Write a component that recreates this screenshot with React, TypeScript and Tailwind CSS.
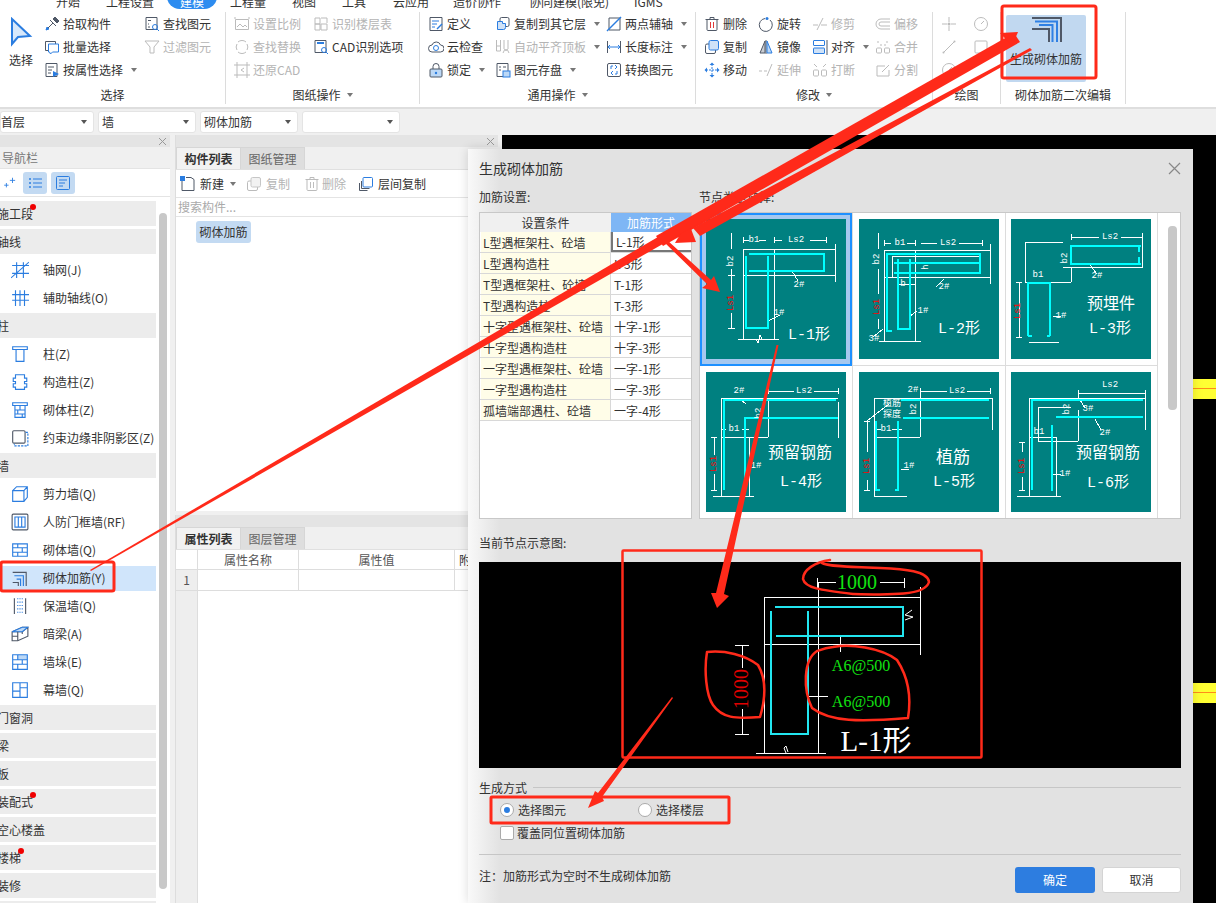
import type { ReactNode } from "react";

const B = "#2b7de0";
const D = "#4f5867";

const icons: Record<string, ReactNode> = {
  pick: <><path d="M2 14l7-7M6 4l6 6" stroke={D} /><path d="M9 3l2-2 4 4-2 2z" fill={D} stroke={D} /><path d="M2 14l1-3 2 2z" fill={B} stroke={B} /></>,
  find: <><path d="M2 1.500h11v12H2z" stroke={D} /><path d="M4 4.500h3M4 8h1M4 11h2" stroke={D} /><circle cx="11" cy="11" r="2.500" stroke={B} /><path d="M13 13l2 2" stroke={B} /></>,
  batch: <><path d="M1.500 2.500h10v9h-10z" stroke={D} /><path d="M4.500 5h10v8h-6l-2 2-1-2h-1z" stroke={B} fill="#fff" /></>,
  filter: <path d="M1 2h14l-5 6v6H6V8z" stroke={D} />,
  attr: <><path d="M2 1.500h11v13H2z" stroke={D} /><path d="M4 5h6M4 8h4M4 11h3" stroke={D} /><path d="M9 9l6 3-6 3z" fill={B} /></>,
  scale: <><path d="M1.500 3.500h13v10h-13z" stroke={D} /><path d="M3 11l3-3 3 3 2-2 2 2" stroke={D} /><path d="M1 1v2M15 1v2" stroke={D} /></>,
  floors: <><path d="M2 2h5v6H2zM8 8h6v6H8zM2 8h5v6H2zM8 2h6v5" stroke={D} /></>,
  replace: <><path d="M4 3a6 6 0 0 1 8 0M12 13a6 6 0 0 1-8 0" stroke={D} /><path d="M3 5a6 6 0 0 0 0 6M13 5a6 6 0 0 1 0 6" stroke={D} /></>,
  cad: <><path d="M2 1.500h11v12H2z" stroke={D} /><path d="M4 4h7" stroke={B} strokeWidth="2" /><circle cx="11" cy="11" r="2.500" stroke={B} /><path d="M13 13l2 2" stroke={B} /></>,
  restore: <><path d="M3 0v16M13 0v16M0 3h16M0 13h16" stroke={D} /><path d="M10 6L7 8l3 2" stroke={D} /></>,
  define: <><path d="M2 1.500h12v13H2z" stroke={D} /><path d="M4 5h7M4 8h5M4 11h3" stroke={B} /><path d="M9 13l5-5" stroke={B} strokeWidth="1.500" /></>,
  cloud: <><path d="M4 13a3.500 3.500 0 0 1 0-7 4.500 4.500 0 0 1 8.500 0 3.500 3.500 0 0 1 0 7z" stroke={D} /><circle cx="8" cy="9" r="2.500" stroke={B} /></>,
  lock: <><rect x="2" y="7" width="12" height="8" rx="1" fill="#bcd8f6" stroke={D} /><path d="M5 7V4.500a3 3 0 0 1 6 0V7" stroke={D} /><circle cx="8" cy="11" r="1.200" fill={B} /></>,
  copyTo: <><rect x="5" y="1.500" width="9" height="9" rx="1.500" fill="#fff" stroke={D} /><path d="M2.500 5.500h5v2h3v4a2 2 0 0 1-2 2h-6z" fill="#cfe2f8" stroke={B} /></>,
  align: <><path d="M1.500 1v11h4V1M1.500 7h4" stroke={D} /><path d="M9 1v9M13 1v9M8 14l2-4 1 2 1-2 2 4" stroke={D} /></>,
  save: <><path d="M2 1.500h11v13H2z" stroke={D} /><path d="M4 5h2M8 5h3M4 8h2" stroke={D} /><rect x="8" y="9" width="7" height="6" fill="#bcd8f6" stroke={B} /></>,
  axis: <><path d="M3 2h11v12H3z" stroke={D} /><path d="M1 15L15 1" stroke={B} strokeWidth="1.500" /></>,
  measure: <><path d="M1.500 2v12M14.500 2v12" stroke={D} /><path d="M2 8h12M4 6L2 8l2 2M12 6l2 2-2 2" stroke={B} /></>,
  convert: <><rect x="1.500" y="1.500" width="13" height="13" rx="1.500" stroke={D} /><path d="M5 7V4h2M11 9v3H9M9 3l2 2-2 2M7 9l-2 2 2 2" stroke={B} /></>,
  del: <><path d="M3 4v9.500a1 1 0 0 0 1 1h8a1 1 0 0 0 1-1V4M1.500 3.500h13M6 3.500V1.500h4v2" stroke={D} /><path d="M6.500 6v6M9.500 6v6" stroke="#e03b3b" /></>,
  rotate: <><path d="M12 4a6.500 6.500 0 1 1-5-1.500" stroke={D} /><circle cx="9" cy="2.500" r="1.500" fill={B} /></>,
  trim: <><path d="M1 9h5M9 9h6M11 2L5 14" stroke={D} /></>,
  offset: <><path d="M15 3H6a5 5 0 0 0 0 10h9M15 6H6a2 2 0 0 0 0 4h9" stroke={D} /></>,
  dup: <><rect x="1.500" y="5" width="10" height="9.500" rx="1.500" stroke={D} /><rect x="5" y="1.500" width="9.500" height="9.500" rx="1.500" fill="#cfe2f8" stroke={B} /></>,
  mirror: <><path d="M8 1v14" stroke={D} /><path d="M7 2L2 14h5z" fill="#c9ccd2" stroke={D} /><path d="M9 2l5 12H9z" fill="#bcd8f6" stroke={B} /></>,
  alignH: <><path d="M15 1v15" stroke={D} /><rect x="1.500" y="1.500" width="11" height="5" rx="0.500" stroke={B} /><rect x="1.500" y="9" width="11" height="5.500" rx="0.500" fill="#cfe2f8" stroke={B} /></>,
  merge: <><path d="M2 3h2M11 3h2M5 6l2 0M9 6h2" stroke={D} /><rect x="1.500" y="9" width="5" height="5" rx="1" stroke={D} /><rect x="9.500" y="9" width="5" height="5" rx="1" stroke={D} /></>,
  move: <><path d="M8 2v12M2 8h12" stroke={B} strokeDasharray="2 1" /><path d="M5.500 3L8 .5 10.500 3zM5.500 13L8 15.500 10.500 13zM3 5.500L.5 8 3 10.500zM13 5.500L15.500 8 13 10.500z" fill={B} /></>,
  extend: <><path d="M1 9h3M6 9h3M14 2L9 14" stroke={D} /></>,
  split: <><path d="M2 2l3 3M11 5l3-3" stroke={D} /><rect x="1.500" y="8" width="5" height="6" rx="1" stroke={D} /><rect x="9.500" y="8" width="5" height="6" rx="1" stroke={D} /></>,
  divide: <><path d="M2 4h8M2 4v10h12V8" stroke={D} /><path d="M7 10l7-7" stroke={D} /></>,
  point: <><path d="M8 1v5M8 10v5M1 8h5M10 8h5" stroke={D} /><circle cx="8" cy="8" r="1.500" fill={D} /></>,
  clock: <><circle cx="8" cy="8" r="6.500" stroke={D} /><path d="M8 8l3-3" stroke={D} /></>,
  line: <><path d="M2 14L14 2" stroke={D} /><circle cx="2.500" cy="13.500" r="1" fill={D} /><circle cx="13.500" cy="2.500" r="1" fill={D} /></>,
  rect: <rect x="2" y="2" width="12" height="12" rx="1" stroke={D} />,
  plus: <><path d="M12 2v6M9 5h6M5 8v5M2.500 10.500h5" stroke={B} /></>,
  list: <><path d="M2 4h2M2 8h2M2 12h2" stroke={B} strokeWidth="1.500" /><path d="M6 4h9M6 8h9M6 12h9" stroke={B} /></>,
  form: <><rect x="1.500" y="1.500" width="13" height="13" rx="1" stroke={B} /><path d="M4 5h8M4 8h6M4 11h4" stroke={B} /></>,
  newFile: <><path d="M2 3.500v11h12v-11l-3-2H6" stroke={D} /><path d="M0 0h5v5H0z" fill={B} /></>,
  layerCopy: <><rect x="5" y="1.500" width="9.500" height="9.500" rx="1" fill="#fff" stroke={B} /><path d="M3.500 5v7.500h8M1.500 7v7.500h8" stroke={D} /></>,
  grid: <><path d="M0 15L16 1M1 4h15M1 11h15M5 1v14M11 1v14" stroke={B} /></>,
  aux: <><path d="M1 5h15M1 10h15M4 1v14M8 1v14M12 1v14" stroke={B} /></>,
  col: <><path d="M1.500 1.500h13v2.500h-13zM4.500 4v10.500h7V4" stroke={B} /></>,
  ccol: <><path d="M4 1.500h8v3h2v3h-2v2h2v3h-2v2H4v-2H2v-3h2v-2H2v-3h2z" stroke={B} /></>,
  bcol: <><path d="M1.500 1.500h13v2.500h-13zM3.500 4v10.500h9V4M3.500 8h9M3.500 11.500h9M8 4v4M6 8v3.500M10 11.500v3" stroke={B} /></>,
  edge: <><rect x="1.500" y="1.500" width="11" height="11" rx="1" stroke={D} /><path d="M13 3h2v12H3v-2" stroke={B} strokeDasharray="2 1" /></>,
  shear: <><path d="M1.500 5h10v9.500h-10zM1.500 5L5 1.500h9.500V11l-3 3.500M11.500 5l3-3.500" stroke={B} /></>,
  door: <><rect x="1" y="1" width="14" height="14" rx="1" stroke={D} /><path d="M3.500 3.500h9v9h-9zM6.500 3.500v9M9.500 3.500v9" stroke={B} /></>,
  brick: <><path d="M1.500 2.500h13v11h-13zM1.500 6h13M1.500 10h13M6 2.500V6M10 6v4M6 10v3.500" stroke={B} /></>,
  rebar: <><path d="M1.500 3h12v12" stroke={D} /><path d="M3 6h8v9M5 9h3.500v6" stroke={B} /><path d="M1.500 12h5v3" stroke={D} /></>,
  therm: <><path d="M3 1v14M13 1v14" stroke={D} /><path d="M6 1v14M8 1v14M10 1v14" stroke={B} strokeDasharray="1 2" /></>,
  beam: <><path d="M1 6l9-4h5v8l-9 4H1zM1 6h9l5-4M10 6v2" stroke={D} /><path d="M1 6l9-4h5l-5 4z" fill="#bcd8f6" stroke={B} /><path d="M1 10h5M6 6v8" stroke={D} /></>,
  buttress: <><path d="M6 1.500h8.500V6H6z" fill="#bcd8f6" /><path d="M1.500 1.500h13v13h-13zM1.500 6h13M1.500 10h13M6 1.500V6M10 6v4M6 10v4.500" stroke={B} /></>,
  curtain: <><path d="M1.500 1.500h13v13h-13zM8 1.500v13M8 6h6.500M1.500 9H8" stroke={B} /></>,
};

const Ico = ({ name, size = 16, off = false }: { name: string; size?: number; off?: boolean }) => (
  <svg
    width={size}
    height={size}
    viewBox="0 0 16 16"
    fill="none"
    className={off ? "shrink-0 opacity-40 grayscale" : "shrink-0"}
  >
    {icons[name]}
  </svg>
);

const Caret = ({ color = "border-t-[#777]" }: { color?: string }) => (
  <span className={`inline-block w-0 h-0 border-x-[3px] border-t-[4px] border-x-transparent ${color}`} />
);

type RibbonEntry = { icon: string; text: string; off?: boolean; caret?: boolean };

const RibbonCol = ({ w, items }: { w: string; items: RibbonEntry[] }) => (
  <div className={`${w} shrink-0 flex flex-col`}>
    {items.map((it) => (
      <div key={it.text} className="h-[23px] flex items-center gap-[3px] whitespace-nowrap">
        <Ico name={it.icon} off={it.off} />
        <span className={it.off ? "text-[#b4b4b4]" : "text-[#333]"}>{it.text}</span>
        {it.caret && <span className="ml-[5px] flex"><Caret /></span>}
      </div>
    ))}
  </div>
);

const RibbonGroup = ({ w, label, caret, children }: { w: string; label: string; caret?: boolean; children: ReactNode }) => (
  <div className={`${w} shrink-0 h-[92px] mt-[3px] flex flex-col border-r border-[#dcdcdc]`}>
    <div className="flex-1 flex">{children}</div>
    <div className="h-[22px] pt-[4px] flex items-center justify-center gap-[6px] text-[#333]">
      <span>{label}</span>
      {caret && <Caret />}
    </div>
  </div>
);

const Ribbon = () => (
  <div className="h-[100px] flex bg-white border-b-2 border-[#dedede] text-xs">
    <RibbonGroup w="w-[226px]" label="选择">
      <div className="w-[44px] flex flex-col items-center shrink-0">
        <svg width="24" height="30" viewBox="0 0 24 30" className="mt-[5px] -ml-[2px]">
          <path d="M3 2l18 17-12 1-6 7z" fill="#d7e8fb" stroke={B} strokeWidth="2" />
        </svg>
        <span className="mt-[5px] -ml-[2px] text-[#333]">选择</span>
      </div>
      <RibbonCol
        w="w-[100px]"
        items={[
          { icon: "pick", text: "拾取构件" },
          { icon: "batch", text: "批量选择" },
          { icon: "attr", text: "按属性选择", caret: true },
        ]}
      />
      <RibbonCol
        w="w-[80px]"
        items={[
          { icon: "find", text: "查找图元" },
          { icon: "filter", text: "过滤图元", off: true },
        ]}
      />
    </RibbonGroup>
    <RibbonGroup w="w-[194px]" label="图纸操作" caret>
      <div className="pl-[8px] flex">
        <RibbonCol
          w="w-[79px]"
          items={[
            { icon: "scale", text: "设置比例", off: true },
            { icon: "replace", text: "查找替换", off: true },
            { icon: "restore", text: "还原CAD", off: true },
          ]}
        />
        <RibbonCol
          w="w-[100px]"
          items={[
            { icon: "floors", text: "识别楼层表", off: true },
            { icon: "cad", text: "CAD识别选项" },
          ]}
        />
      </div>
    </RibbonGroup>
    <RibbonGroup w="w-[276px]" label="通用操作" caret>
      <div className="pl-[8px] flex">
        <RibbonCol
          w="w-[67px]"
          items={[
            { icon: "define", text: "定义" },
            { icon: "cloud", text: "云检查" },
            { icon: "lock", text: "锁定", caret: true },
          ]}
        />
        <RibbonCol
          w="w-[111px]"
          items={[
            { icon: "copyTo", text: "复制到其它层", caret: true },
            { icon: "align", text: "自动平齐顶板", caret: true, off: true },
            { icon: "save", text: "图元存盘", caret: true },
          ]}
        />
        <RibbonCol
          w="w-[85px]"
          items={[
            { icon: "axis", text: "两点辅轴", caret: true },
            { icon: "measure", text: "长度标注", caret: true },
            { icon: "convert", text: "转换图元" },
          ]}
        />
      </div>
    </RibbonGroup>
    <RibbonGroup w="w-[237px]" label="修改" caret>
      <div className="pl-[8px] flex">
        <RibbonCol
          w="w-[54px]"
          items={[
            { icon: "del", text: "删除" },
            { icon: "dup", text: "复制" },
            { icon: "move", text: "移动" },
          ]}
        />
        <RibbonCol
          w="w-[54px]"
          items={[
            { icon: "rotate", text: "旋转" },
            { icon: "mirror", text: "镜像" },
            { icon: "extend", text: "延伸", off: true },
          ]}
        />
        <RibbonCol
          w="w-[63px]"
          items={[
            { icon: "trim", text: "修剪", off: true },
            { icon: "alignH", text: "对齐", caret: true },
            { icon: "split", text: "打断", off: true },
          ]}
        />
        <RibbonCol
          w="w-[50px]"
          items={[
            { icon: "offset", text: "偏移", off: true },
            { icon: "merge", text: "合并", off: true },
            { icon: "divide", text: "分割", off: true },
          ]}
        />
      </div>
    </RibbonGroup>
    <RibbonGroup w="w-[68px]" label="绘图">
      <div className="pl-[8px] flex">
        <div className="w-[32px] flex flex-col">
          {["point", "line", "clock"].map((n) => (
            <div key={n} className="h-[23px] flex items-center"><Ico name={n} off /></div>
          ))}
        </div>
        <div className="flex flex-col">
          {["clock", "rect"].map((n) => (
            <div key={n} className="h-[23px] flex items-center"><Ico name={n} off /></div>
          ))}
        </div>
      </div>
    </RibbonGroup>
    <RibbonGroup w="w-[125px]" label="砌体加筋二次编辑">
      <div className="pl-[5px]">
        <div className="w-[80px] h-[67px] mt-[3px] bg-[#c1d8f0] rounded-[2px] flex flex-col items-center">
          <svg width="32" height="30" viewBox="0 0 32 30" fill="none" className="ml-[2px]">
            <path d="M1 3H30V27" stroke="#4f5867" strokeWidth="2" />
            <path d="M4 6.500H26V27M8 10H21.500V27" stroke="#2f80e4" strokeWidth="2" />
            <path d="M1 14H18V27" stroke="#4f5867" strokeWidth="2" />
          </svg>
          <span className="mt-[6px] text-[#333]">生成砌体加筋</span>
        </div>
      </div>
    </RibbonGroup>
  </div>
);

const selects = [
  { w: "w-[94px]", text: "首层", pad: "pl-0" },
  { w: "w-[98px]", text: "墙", pad: "pl-[3px]" },
  { w: "w-[98px]", text: "砌体加筋", pad: "pl-[3px]" },
  { w: "w-[98px]", text: "", pad: "pl-[3px]" },
];

const Toolbar = () => (
  <div className="h-[26px] bg-[#f0f0f0] flex gap-[4px] pt-[2px] text-xs text-[#333]">
    {selects.map((s) => (
      <div key={s.w + s.text} className={`${s.w} ${s.pad} h-[22px] bg-white border border-[#e4e4e4] rounded-[3px] flex items-center justify-between pr-[6px]`}>
        <span>{s.text}</span>
        <Caret color="border-t-[#555]" />
      </div>
    ))}
  </div>
);

type NavSection = { title: string; dot?: number; items?: { icon: string; text: string; active?: boolean }[] };

const nav: NavSection[] = [
  { title: "施工段", dot: 1 },
  { title: "轴线", items: [{ icon: "grid", text: "轴网(J)" }, { icon: "aux", text: "辅助轴线(O)" }] },
  {
    title: "柱",
    items: [
      { icon: "col", text: "柱(Z)" },
      { icon: "ccol", text: "构造柱(Z)" },
      { icon: "bcol", text: "砌体柱(Z)" },
      { icon: "edge", text: "约束边缘非阴影区(Z)" },
    ],
  },
  {
    title: "墙",
    items: [
      { icon: "shear", text: "剪力墙(Q)" },
      { icon: "door", text: "人防门框墙(RF)" },
      { icon: "brick", text: "砌体墙(Q)" },
      { icon: "rebar", text: "砌体加筋(Y)", active: true },
      { icon: "therm", text: "保温墙(Q)" },
      { icon: "beam", text: "暗梁(A)" },
      { icon: "buttress", text: "墙垛(E)" },
      { icon: "curtain", text: "幕墙(Q)" },
    ],
  },
  { title: "门窗洞" },
  { title: "梁" },
  { title: "板" },
  { title: "装配式", dot: 1 },
  { title: "空心楼盖" },
  { title: "楼梯", dot: 1 },
  { title: "装修" },
  { title: "土方" },
];

const CloseStrip = () => (
  <div className="h-[12px] bg-[#e4e4e4] flex items-center justify-end pr-[3px]">
    <svg width="9" height="9" viewBox="0 0 9 9"><path d="M1 1l7 7M8 1L1 8" stroke="#999" /></svg>
  </div>
);

const LeftPanel = () => (
  <div className="w-[170px] shrink-0 h-full bg-white relative overflow-hidden text-xs text-[#333]">
    <CloseStrip />
    <div className="h-[22px] bg-[#f0f0f0] flex items-center text-[#777] pl-[2px] border-b border-[#e4e4e4]">导航栏</div>
    <div className="h-[28px] flex items-center pl-[2px] border-b border-[#e4e4e4]">
      <Ico name="plus" size={14} />
      <div className="ml-[7px] w-[24px] h-[22px] bg-[#c3daf2] rounded-[3px] flex items-center justify-center"><Ico name="list" size={16} /></div>
      <div className="ml-[4px] w-[24px] h-[22px] bg-[#c3daf2] rounded-[3px] flex items-center justify-center"><Ico name="form" size={16} /></div>
    </div>
    <div className="w-[156px] pt-[4px] flex flex-col gap-[3px]">
      {nav.map((sec) => (
        <div key={sec.title}>
          <div className="h-[25px] bg-[#ececec] flex items-center relative">
            <span className="-ml-[3px] whitespace-nowrap relative">
              {sec.title}
              {sec.dot && <span className="absolute -right-[3px] -top-[2px] w-[6px] h-[6px] rounded-full bg-[#f00000]" />}
            </span>
          </div>
          {sec.items && (
            <div className="pt-[2px] -mb-[2px]">
              {sec.items.map((it) => (
                <div key={it.text} className="h-[28px] flex items-center">
                  <div className={`w-full h-[25px] flex items-center pl-[11px] gap-[14px] whitespace-nowrap ${it.active ? "bg-[#d0e5fb]" : ""}`}>
                    <Ico name={it.icon} size={18} />
                    <span>{it.text}</span>
                  </div>
                </div>
              ))}
            </div>
          )}
        </div>
      ))}
    </div>
    <div className="absolute left-[159px] top-[78px] w-[8px] h-[676px] rounded-[4px] bg-[#c8c8c8]" />
  </div>
);

const Tabs = ({ a, b }: { a: string; b: string }) => (
  <div className="h-[23px] bg-[#f0f0f0] flex border-b border-[#e0e0e0] text-xs">
    <div className="w-[65px] flex items-center justify-center font-bold text-[#333] bg-[#f2f2f2] border border-b-0 border-[#d6d6d6]">{a}</div>
    <div className="w-[64px] flex items-center justify-center text-[#666] bg-[#dedede] border-r border-t border-[#d6d6d6]">{b}</div>
  </div>
);

const MiddlePanel = () => (
  <div className="w-[323px] shrink-0 h-full flex flex-col text-xs text-[#333] ml-[5px] bg-[#f0f0f0]">
    <div className="h-[376px] bg-white flex flex-col border-l border-[#ddd]">
      <CloseStrip />
      <Tabs a="构件列表" b="图纸管理" />
      <div className="h-[27px] flex items-center pl-[4px] shrink-0">
        <Ico name="newFile" />
        <span className="ml-[4px]">新建</span>
        <span className="ml-[6px] flex"><Caret /></span>
        <span className="ml-[10px]"><Ico name="dup" off /></span>
        <span className="ml-[4px] text-[#b4b4b4]">复制</span>
        <span className="ml-[14px]"><Ico name="del" off /></span>
        <span className="ml-[2px] text-[#b4b4b4]">删除</span>
        <span className="ml-[12px]"><Ico name="layerCopy" /></span>
        <span className="ml-[4px]">层间复制</span>
      </div>
      <div className="h-[20px] flex items-center pl-[2px] text-[#aaa] border-y border-[#e4e4e4]">搜索构件...</div>
      <div className="pl-[20px] pt-[4px]">
        <div className="w-[55px] h-[22px] bg-[#c3daf2] rounded-[3px] flex items-center justify-center">砌体加筋</div>
      </div>
    </div>
    <div className="h-[4px]" />
    <div className="flex-1 bg-white flex flex-col border-l border-[#ddd]">
      <CloseStrip />
      <Tabs a="属性列表" b="图层管理" />
      <div className="flex h-[20px] border-b border-[#ddd] shrink-0">
        <div className="w-[22px] border-r border-[#ddd]" />
        <div className="w-[101px] border-r border-[#ddd] flex items-center justify-center text-[#555]">属性名称</div>
        <div className="w-[156px] border-r border-[#ddd] flex items-center justify-center text-[#555]">属性值</div>
        <div className="pl-[4px] flex items-center">附加</div>
      </div>
      <div className="flex h-[21px] border-b border-[#ddd] shrink-0">
        <div className="w-[22px] border-r border-[#ddd] bg-[#eeeeee] flex items-center justify-center text-[#555]">1</div>
        <div className="w-[101px] border-r border-[#ddd]" />
        <div className="w-[156px] border-r border-[#ddd]" />
      </div>
      <div className="flex-1 w-[22px] bg-[#eeeeee] border-r border-[#ddd]" />
    </div>
  </div>
);

const Canvas = () => (
  <div className="flex-1 h-full bg-black ml-[4px] flex flex-col">
    <div className="mt-[244px] h-[20px] bg-[#ffff33] pt-[9px]"><div className="h-[1px] bg-[#ff8c1a]" /></div>
    <div className="mt-[284px] h-[20px] bg-[#ffff33] pt-[9px]"><div className="h-[1px] bg-[#ff8c1a]" /></div>
  </div>
);

const rows = [
  ["L型遇框架柱、砼墙", "L-1形"],
  ["L型遇构造柱", "L-3形"],
  ["T型遇框架柱、砼墙", "T-1形"],
  ["T型遇构造柱", "T-3形"],
  ["十字型遇框架柱、砼墙", "十字-1形"],
  ["十字型遇构造柱", "十字-3形"],
  ["一字型遇框架柱、砼墙", "一字-1形"],
  ["一字型遇构造柱", "一字-3形"],
  ["孤墙端部遇柱、砼墙", "一字-4形"],
];

const SettingsTable = () => (
  <div className="w-[213px] h-[307px] bg-white border border-[#c8c8c8] text-xs text-[#333] shrink-0">
    <div className="flex h-[19px]">
      <div className="w-[131px] bg-[#f0f0f0] flex items-center justify-center pt-[1px]">设置条件</div>
      <div className="flex-1 bg-[#7eb6f5] text-white flex items-center justify-center pt-[1px]">加筋形式</div>
    </div>
    {rows.map((r, i) => (
      <div key={r[0]} className="flex h-[21px] border-b border-[#d8d8d8] pl-[1px]">
        <div className="w-[130px] bg-[#fffde8] border-r border-[#d8d8d8] flex items-center pl-[2px] pt-[1px] whitespace-nowrap">{r[0]}</div>
        <div className={`flex-1 flex items-center pl-[3px] pt-[1px] ${i === 0 ? "border-2 border-[#777] border-t-0 border-r-0" : ""}`}>{r[1]}</div>
      </div>
    ))}
  </div>
);

const W = "#ffffff";
const C = "#00ffff";
const mono = '"Liberation Mono", "Noto Sans CJK SC", monospace';

const Txt = ({ x, y, s = 10, fill = W, rot, children }: { x: number; y: number; s?: number; fill?: string; rot?: boolean; children: ReactNode }) => (
  <text
    x={x}
    y={y}
    fontSize={s}
    fill={fill}
    fontFamily={mono}
    textAnchor="middle"
    dominantBaseline="central"
    transform={rot ? `rotate(-90 ${x} ${y})` : undefined}
  >
    {children}
  </text>
);

const Thumb = ({ lines, cyan, children }: { lines: string; cyan: string[]; children: ReactNode }) => (
  <svg width="140" height="140" viewBox="0 0 140 140" className="bg-[#008080]" fill="none">
    <path d={lines} stroke={W} strokeWidth="1" shapeRendering="crispEdges" />
    {cyan.map((d) => (
      <path key={d} d={d} stroke={C} strokeWidth="2" shapeRendering="crispEdges" />
    ))}
    {children}
  </svg>
);

const thumbs: ReactNode[] = [
  <Thumb
    key="1"
    lines="M37 21H43M53 21H60M68 21H76M104 21H120M37 18v6M68 18v6M120 18v6M37 30H129M37 56H129M37 30V120M68 30V120M32 120H73M129 25V63M25 14V30M25 50V72M25 94V109M22 109H29M22 56H29M86 52L92 62M62 102L74 96M50 120l2 4 2-8 2 4"
    cyan={["M43 35H118V52H43", "M40 37V109H62V37"]}
  >
    <Txt x={48} y={21} s={9}>b1</Txt>
    <Txt x={90} y={21} s={9}>Ls2</Txt>
    <Txt x={25} y={42} s={9} rot>b2</Txt>
    <Txt x={25} y={84} s={9} fill="#ff0000" rot>Ls1</Txt>
    <Txt x={93} y={66} s={9}>2#</Txt>
    <Txt x={73} y={94} s={9}>1#</Txt>
    <Txt x={103} y={116} s={15}>L-1形</Txt>
  </Thumb>,
  <Thumb
    key="2"
    lines="M25 24H32M48 24H56M62 24H78M100 24H123M25 21v6M56 21v6M123 21v6M25 31H131M25 58H131M25 31V122M56 31V122M20 122H62M131 25V65M33 37V58M33 37H121M19 14V30M19 50V75M19 100V110M40 65H56M77 68L85 60M50 98L58 92M24 110L14 118"
    cyan={["M33 112H28V35H121V54H35", "M35 44H121", "M39 40V110H51V40"]}
  >
    <Txt x={41} y={24} s={9}>b1</Txt>
    <Txt x={89} y={24} s={9}>Ls2</Txt>
    <Txt x={18} y={40} s={9} rot>b2</Txt>
    <Txt x={18} y={88} s={9} fill="#ff0000" rot>Ls1</Txt>
    <Txt x={44} y={65} s={9}>b</Txt>
    <Txt x={67} y={48} s={9} rot>h</Txt>
    <Txt x={85} y={68} s={9}>2#</Txt>
    <Txt x={64} y={92} s={9}>1#</Txt>
    <Txt x={15} y={120} s={9}>3#</Txt>
    <Txt x={100} y={110} s={15}>L-2形</Txt>
  </Thumb>,
  <Thumb
    key="3"
    lines="M60 18H88M110 18H131M60 15v6M131 15v6M14 23H52M14 23V63M14 63H60M60 49V63M52 48H131M131 14V49M8 63V118M5 63H11M5 118H11M18 123H48M20 63H45M42 97H50M79 46L86 55"
    cyan={["M130 27H60V45H130", "M128 27V33M128 45V38", "M17 117V64H39V117", "M17 117H21M39 117H36"]}
  >
    <Txt x={99} y={18} s={9}>Ls2</Txt>
    <Txt x={27} y={56} s={9}>b1</Txt>
    <Txt x={54} y={39} s={9} rot>b2</Txt>
    <Txt x={7} y={92} s={9} fill="#ff0000" rot>Ls1</Txt>
    <Txt x={86} y={57} s={9}>2#</Txt>
    <Txt x={50} y={97} s={9}>1#</Txt>
    <Txt x={100} y={86} s={16}>预埋件</Txt>
    <Txt x={99} y={110} s={15}>L-3形</Txt>
  </Thumb>,
  <Thumb
    key="4"
    lines="M62 19H88M108 19H132M62 16v6M132 16v6M15 26H132M15 65H62M62 26V65M15 26V124M7 124H48M43 65V124M15 57H20M36 57H43M8 65V83M8 102V118M5 65H11M5 118H11M132 30V66M33 26L40 32"
    cyan={["M18 118V28H130", "M39 112V46H132"]}
  >
    <Txt x={33} y={19} s={9}>2#</Txt>
    <Txt x={98} y={19} s={9}>Ls2</Txt>
    <Txt x={28} y={57} s={9}>b1</Txt>
    <Txt x={53} y={41} s={9} rot>b2</Txt>
    <Txt x={8} y={92} s={9} fill="#ff0000" rot>Ls1</Txt>
    <Txt x={50} y={94} s={9}>1#</Txt>
    <Txt x={94} y={82} s={16}>预留钢筋</Txt>
    <Txt x={95} y={110} s={15}>L-4形</Txt>
  </Thumb>,
  <Thumb
    key="5"
    lines="M61 19H88M108 19H131M61 16v6M131 16v6M15 26H133M15 65H61M61 19V65M15 26V124M15 124H48M133 26V58M8 49V80M8 108V118M5 49H11M5 118H11M15 57H22M33 57H43M42 97H50M30 32L8 49"
    cyan={["M42 28H130", "M44 46H130", "M17 49V118H21", "M39 49V118H36"]}
  >
    <Txt x={54} y={18} s={9}>2#</Txt>
    <Txt x={98} y={19} s={9}>Ls2</Txt>
    <Txt x={33} y={32} s={9}>植筋</Txt>
    <Txt x={33} y={43} s={9}>探度</Txt>
    <Txt x={55} y={37} s={9} rot>b2</Txt>
    <Txt x={27} y={57} s={9}>b1</Txt>
    <Txt x={8} y={94} s={9} fill="#ff0000" rot>Ls1</Txt>
    <Txt x={50} y={94} s={9}>1#</Txt>
    <Txt x={94} y={86} s={17}>植筋</Txt>
    <Txt x={95} y={110} s={15}>L-5形</Txt>
  </Thumb>,
  <Thumb
    key="6"
    lines="M67 21H134M67 18V28M134 18V58M18 26H134M18 26V124M6 124H50M45 65V124M27 35H60M27 35V69H67M67 38V69M18 65H45M11 70V80M11 105V118M8 70H14M8 118H14M69 28L74 36M84 47L90 58M42 102H50"
    cyan={["M21 118V28H132", "M45 45H132", "M41 119V53"]}
  >
    <Txt x={99} y={13} s={9}>Ls2</Txt>
    <Txt x={77} y={37} s={9}>3#</Txt>
    <Txt x={94} y={61} s={9}>2#</Txt>
    <Txt x={56} y={37} s={9} rot>b2</Txt>
    <Txt x={28} y={60} s={9}>b1</Txt>
    <Txt x={11} y={94} s={9} fill="#ff0000" rot>Ls1</Txt>
    <Txt x={54} y={102} s={9}>1#</Txt>
    <Txt x={97} y={82} s={16}>预留钢筋</Txt>
    <Txt x={97} y={111} s={15}>L-6形</Txt>
  </Thumb>,
];

const NodeGrid = () => (
  <div className="w-[482px] h-[307px] bg-white border border-[#c8c8c8] flex">
    <div className="w-[458px] grid grid-cols-3 grid-rows-2 border-r border-[#dcdcdc]">
      {thumbs.map((t, i) => (
        <div key={i} className={`flex items-center justify-center ${i === 0 ? "border-2 border-[#1e90ff] bg-[#a6c8ef]" : "border-[#dcdcdc]"} ${i > 0 && i < 3 ? "border-b border-l" : ""} ${i > 3 ? "border-l" : ""}`}>
          {t}
        </div>
      ))}
    </div>
    <div className="flex-1 pl-[10px] pt-[13px]">
      <div className="w-[9px] h-[184px] rounded-[4px] bg-[#c8c8c8]" />
    </div>
  </div>
);

const Preview = () => (
  <div className="w-[702px] h-[206px] bg-black shrink-0">
    <svg width="702" height="206" viewBox="479 562 702 206" fill="none">
      <path
        d="M764 597H920M764 644H920M764 597V753M818 597V753M756 753H826M920 587V655M818 583V598M817 582H836M880 582H904M904 578V588M817 578V588M840 636V652M742 645V668M742 709V734M735 645H749M735 734H749M808 696H828"
        stroke="#fff"
        shapeRendering="crispEdges"
      />
      <path d="M912 610l-7 5 8 2-8 3M786 753l-2-5 2-2 2 6" stroke="#fff" />
      <path d="M775 607H903V636H776M771 611V734H808V611" stroke="#22e6f0" strokeWidth="2" shapeRendering="crispEdges" />
      <text x="857" y="589" fontSize="20" fill="#12e212" fontFamily='"Liberation Serif", serif' textAnchor="middle">1000</text>
      <text x="861" y="671" fontSize="16" fill="#12e212" fontFamily='"Liberation Serif", serif' textAnchor="middle">A6@500</text>
      <text x="861" y="707" fontSize="16" fill="#12e212" fontFamily='"Liberation Serif", serif' textAnchor="middle">A6@500</text>
      <text x="748" y="689" fontSize="20" fill="#e00000" fontFamily='"Liberation Serif", serif' textAnchor="middle" transform="rotate(-90 748 689)">1000</text>
      <text x="876" y="751" fontSize="29" fill="#fff" fontFamily='"Liberation Serif", "Noto Sans CJK SC", serif' textAnchor="middle">L-1形</text>
    </svg>
  </div>
);

const Dialog = () => (
  <div className="absolute left-[468px] top-[149px] w-[725px] h-[754px] pl-[11px] pr-[12px] text-xs text-[#333] bg-[linear-gradient(90deg,#f9f9f9,#e2e2e2_32px)] shadow-[0_0_10px_rgba(0,0,0,0.15)]">
    <div className="h-[38px] flex items-center justify-between">
      <span className="text-sm">生成砌体加筋</span>
      <svg width="13" height="13" viewBox="0 0 13 13"><path d="M1 1l11 11M12 1L1 12" stroke="#888" strokeWidth="1.200" /></svg>
    </div>
    <div className="h-[20px] flex items-center">
      <span className="w-[220px]">加筋设置:</span>
      <span>节点类型选择:</span>
    </div>
    <div className="mt-[5px] flex gap-[7px]">
      <SettingsTable />
      <NodeGrid />
    </div>
    <div className="mt-[14px] h-[20px] flex items-center">当前节点示意图:</div>
    <div className="mt-[9px]"><Preview /></div>
    <div className="mt-[10px] h-[20px] flex items-center gap-[6px]">
      <span>生成方式</span>
      <div className="flex-1 h-[1px] mb-[2px] bg-[#c6c6c6]" />
    </div>
    <div className="h-[24px] flex items-center pl-[21px]">
      <div className="w-[14px] h-[14px] rounded-full bg-white border border-[#aaa] flex items-center justify-center">
        <div className="w-[6px] h-[6px] rounded-full bg-[#2b7de0]" />
      </div>
      <span className="ml-[4px] w-[120px]">选择图元</span>
      <div className="w-[14px] h-[14px] rounded-full bg-white border border-[#aaa]" />
      <span className="ml-[4px]">选择楼层</span>
    </div>
    <div className="h-[22px] flex items-center pl-[21px]">
      <div className="w-[14px] h-[14px] rounded-[2px] bg-white border border-[#aaa]" />
      <span className="ml-[3px]">覆盖同位置砌体加筋</span>
    </div>
    <div className="mt-[10px] h-[1px] bg-[#c6c6c6]" />
    <div className="mt-[12px] flex items-start justify-between">
      <span className="mt-[1px]">注：加筋形式为空时不生成砌体加筋</span>
      <div className="flex gap-[7px]">
        <div className="w-[80px] h-[26px] rounded-[3px] bg-[#2d7de0] text-white flex items-center justify-center">确定</div>
        <div className="w-[79px] h-[26px] rounded-[3px] bg-white border border-[#d4d4d4] flex items-center justify-center">取消</div>
      </div>
    </div>
  </div>
);

const RED = "#ff2a1a";

// markup the author scribbled on top of the screenshot
const Annotations = () => (
  <svg width="1216" height="903" viewBox="0 0 1216 903" fill="none" className="absolute inset-0 pointer-events-none">
    <g stroke={RED} strokeWidth="3" strokeLinejoin="round">
      <rect x="1002" y="6" width="94" height="72" rx="2" />
      <rect x="1" y="562" width="113" height="29" rx="2" />
      <rect x="491" y="797" width="238" height="26" rx="1" />
      <rect x="622.500" y="550.500" width="359" height="207" rx="1" strokeWidth="2.500" />
    </g>
    <g fill={RED}>
      <path d="M1014 33L1020 42L663 246L656 236Z" />
      <path d="M1030 48L1032 50L700 236L693 228Z" />
      <path d="M675 243L696 242L688 221Z" />
      <path d="M1018 32L1000 33L1012 46Z" />
      <path d="M90 570L733 193L738 201L91 571Z" />
      <path d="M664 242L667 240L711 280L714 276L720 292L702 288L707 284Z" />
      <path d="M776.500 345L778.500 345L724 594L729 596L717 608L711 593L716 593Z" />
      <path d="M672 697L673 698L602 797L604 801L588 808L595 791L598 793Z" />
    </g>
    <g stroke={RED} strokeWidth="2.500" strokeLinecap="round" strokeLinejoin="round">
      <path d="M830 560C815 562 803 570 803 579C805 588 820 590 853 594C890 595 925 596 929 582C928 571 905 569 880 568C850 567 825 566 822 563" />
      <path d="M707 652C704 670 706 695 713 705C722 718 735 719 760 717C765 700 767 680 758 665C745 655 725 650 707 652Z" />
      <path d="M817 651C803 660 803 690 812 708C830 722 860 722 908 718C911 700 910 680 897 660C880 647 850 644 833 647C825 648 820 650 817 651Z" />
    </g>
  </svg>
);

const tabs = [
  { text: "开始", w: "w-[24px]", gap: "ml-[56px]" },
  { text: "工程设置", w: "w-[48px]", gap: "ml-[26px]" },
  { text: "工程量", w: "w-[36px]", gap: "ml-[76px]" },
  { text: "视图", w: "w-[24px]", gap: "ml-[26px]" },
  { text: "工具", w: "w-[24px]", gap: "ml-[26px]" },
  { text: "云应用", w: "w-[36px]", gap: "ml-[27px]" },
  { text: "造价协作", w: "w-[52px]", gap: "ml-[24px]" },
  { text: "协同建模(限免)", w: "w-[78px]", gap: "ml-[24px]" },
  { text: "IGMS", w: "w-[31px]", gap: "ml-[27px]" },
];

export default function App() {
  return (
    <div className="relative w-[1216px] h-[903px] overflow-hidden bg-[#f0f0f0] font-['Noto_Sans_CJK_SC','Noto_Sans',sans-serif] text-xs">
      <div className="h-[9px] bg-white flex relative overflow-hidden text-[#333]">
        {tabs.map((t) => (
          <span key={t.text} className={`${t.w} ${t.gap} whitespace-nowrap -mt-[6px] leading-[16px] h-[16px]`}>{t.text}</span>
        ))}
        <div className="absolute left-[167px] -top-[16px] w-[50px] h-[25px] rounded-full bg-[#2d8cf0] flex items-end justify-center text-white leading-[16px]">
          <span className="-mb-[1px]">建模</span>
        </div>
      </div>
      <Ribbon />
      <Toolbar />
      <div className="h-[768px] flex">
        <LeftPanel />
        <MiddlePanel />
        <Canvas />
      </div>
      <Dialog />
      <Annotations />
    </div>
  );
}
